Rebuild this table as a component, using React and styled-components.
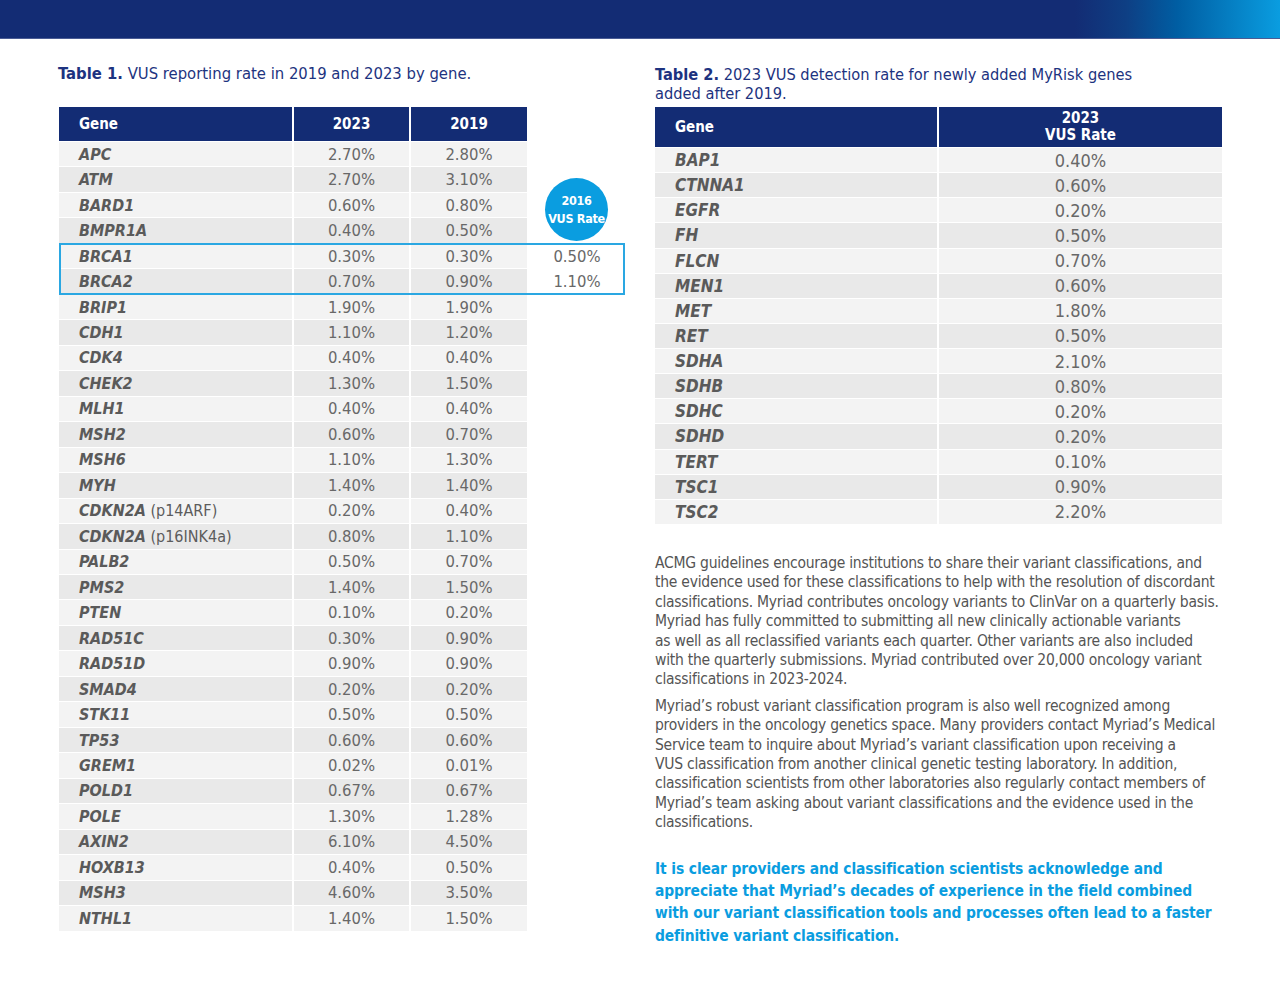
import React from 'react';
import styled, { createGlobalStyle } from 'styled-components';

const GlobalStyle = createGlobalStyle`
  body {
    margin: 0;
    background: #fff;
    font-family: 'DejaVu Sans Condensed', 'Liberation Sans Narrow', 'Liberation Sans', sans-serif;
  }
  * {
    box-sizing: border-box;
  }
`;

const navy = '#132c74';
const cyan = '#0a9de0';

const TopBar = styled.div`
  height: 39px;
  background: linear-gradient(90deg, ${navy} 0%, ${navy} 84%, #0e3f84 88%, #005ea3 92%, #0a9de0 100%);
  border-bottom: 1px solid #4a5c94;
`;

const Page = styled.div`
  display: grid;
  grid-template-columns: 567px 567px;
  column-gap: 30px;
  padding: 24px 0 0 58px;
`;

const Column = styled.div`
  display: flex;
  flex-direction: column;
`;

const Caption = styled.div`
  color: #1d3380;
  font-size: ${p => p.fs}px;
  line-height: 19px;
  height: ${p => p.h}px;
  padding-top: ${p => p.pt}px;
  b {
    font-weight: 700;
  }
`;

const Table = styled.div`
  position: relative;
  width: ${p => p.w}px;
  margin-left: ${p => p.ml || 0}px;
`;

const Row = styled.div`
  display: grid;
  grid-template-columns: ${p => p.cols};
  column-gap: 2px;
  height: ${p => p.h}px;
  border-top: ${p => (p.header ? 'none' : '1px solid #fff')};
`;

const HeadCell = styled.div`
  background: ${p => (p.blank ? 'transparent' : navy)};
  color: #fff;
  font-weight: 700;
  font-size: 15px;
  line-height: 17px;
  display: flex;
  flex-direction: column;
  justify-content: center;
  align-items: ${p => (p.left ? 'flex-start' : 'center')};
  padding-left: ${p => (p.left ? '20px' : '0')};
  text-align: center;
`;

const GeneCell = styled.div`
  background: ${p => (p.odd ? '#f3f3f3' : '#e9e9e9')};
  color: #5a5a5a;
  font-style: italic;
  font-weight: 700;
  font-size: ${p => p.fs}px;
  display: flex;
  align-items: center;
  padding-left: 20px;
  span {
    font-style: normal;
    font-weight: 400;
    color: #5c5c5c;
  }
`;

const NumCell = styled.div`
  background: ${p => (p.blank ? 'transparent' : p.odd ? '#f3f3f3' : '#e9e9e9')};
  color: #686868;
  font-size: ${p => p.fs}px;
  display: flex;
  align-items: center;
  justify-content: center;
`;

const Highlight = styled.div`
  position: relative;
  &::after {
    content: '';
    position: absolute;
    inset: 0 0 -1px 0;
    border: 2px solid #2aa7e2;
    pointer-events: none;
  }
`;

const Badge = styled.div`
  position: absolute;
  left: 486px;
  top: 71px;
  width: 63px;
  height: 63px;
  border-radius: 50%;
  background: ${cyan};
  color: #fff;
  font-weight: 700;
  font-size: 12.5px;
  letter-spacing: -0.3px;
  line-height: 18px;
  white-space: nowrap;
  display: flex;
  align-items: center;
  justify-content: center;
  text-align: center;
`;

const Text = styled.p`
  margin: ${p => p.mt || 0}px 0 0;
  color: #555;
  font-size: 15.5px;
  letter-spacing: -0.25px;
  line-height: 19.4px;
  white-space: nowrap;
`;

const Callout = styled.p`
  margin: 25px 0 0;
  color: ${cyan};
  font-weight: 700;
  font-size: 15.4px;
  letter-spacing: -0.1px;
  line-height: 22.4px;
  white-space: nowrap;
`;

const table1 = [
  ['APC', '2.70%', '2.80%'],
  ['ATM', '2.70%', '3.10%'],
  ['BARD1', '0.60%', '0.80%'],
  ['BMPR1A', '0.40%', '0.50%'],
  ['BRCA1', '0.30%', '0.30%', '0.50%'],
  ['BRCA2', '0.70%', '0.90%', '1.10%'],
  ['BRIP1', '1.90%', '1.90%'],
  ['CDH1', '1.10%', '1.20%'],
  ['CDK4', '0.40%', '0.40%'],
  ['CHEK2', '1.30%', '1.50%'],
  ['MLH1', '0.40%', '0.40%'],
  ['MSH2', '0.60%', '0.70%'],
  ['MSH6', '1.10%', '1.30%'],
  ['MYH', '1.40%', '1.40%'],
  ['CDKN2A|(p14ARF)', '0.20%', '0.40%'],
  ['CDKN2A|(p16INK4a)', '0.80%', '1.10%'],
  ['PALB2', '0.50%', '0.70%'],
  ['PMS2', '1.40%', '1.50%'],
  ['PTEN', '0.10%', '0.20%'],
  ['RAD51C', '0.30%', '0.90%'],
  ['RAD51D', '0.90%', '0.90%'],
  ['SMAD4', '0.20%', '0.20%'],
  ['STK11', '0.50%', '0.50%'],
  ['TP53', '0.60%', '0.60%'],
  ['GREM1', '0.02%', '0.01%'],
  ['POLD1', '0.67%', '0.67%'],
  ['POLE', '1.30%', '1.28%'],
  ['AXIN2', '6.10%', '4.50%'],
  ['HOXB13', '0.40%', '0.50%'],
  ['MSH3', '4.60%', '3.50%'],
  ['NTHL1', '1.40%', '1.50%'],
];

const table2 = [
  ['BAP1', '0.40%'],
  ['CTNNA1', '0.60%'],
  ['EGFR', '0.20%'],
  ['FH', '0.50%'],
  ['FLCN', '0.70%'],
  ['MEN1', '0.60%'],
  ['MET', '1.80%'],
  ['RET', '0.50%'],
  ['SDHA', '2.10%'],
  ['SDHB', '0.80%'],
  ['SDHC', '0.20%'],
  ['SDHD', '0.20%'],
  ['TERT', '0.10%'],
  ['TSC1', '0.90%'],
  ['TSC2', '2.20%'],
];

const cols1 = '233px 115px 116px 96px';
const cols2 = '282px 283px';

const Gene = ({ name }) => {
  const [g, extra] = name.split('|');
  return (
    <>
      {g}
      {extra && <span>&nbsp;{extra}</span>}
    </>
  );
};

const row1 = ([gene, a, b, c], i) => (
  <Row key={gene} cols={cols1} h={25.48}>
    <GeneCell odd={i % 2 === 0} fs={16}>
      <Gene name={gene} />
    </GeneCell>
    <NumCell odd={i % 2 === 0} fs={16.5}>{a}</NumCell>
    <NumCell odd={i % 2 === 0} fs={16.5}>{b}</NumCell>
    <NumCell blank fs={16.5}>{c}</NumCell>
  </Row>
);

const row2 = ([gene, a], i) => (
  <Row key={gene} cols={cols2} h={25.13}>
    <GeneCell odd={i % 2 === 0} fs={17}>{gene}</GeneCell>
    <NumCell odd={i % 2 === 0} fs={18}>{a}</NumCell>
  </Row>
);

export default function App() {
  return (
    <>
      <GlobalStyle />
      <TopBar />
      <Page>
        <Column>
          <Caption h={44} pt={1} fs={16.5}>
            <b>Table 1.</b> VUS reporting rate in 2019 and 2023 by gene.
          </Caption>
          <Table w={566} ml={1}>
            <Row header cols={cols1} h={34}>
              <HeadCell left>Gene</HeadCell>
              <HeadCell>2023</HeadCell>
              <HeadCell>2019</HeadCell>
              <HeadCell blank />
            </Row>
            {table1.slice(0, 4).map((r, i) => row1(r, i))}
            <Highlight>{table1.slice(4, 6).map((r, i) => row1(r, i + 4))}</Highlight>
            {table1.slice(6).map((r, i) => row1(r, i + 6))}
            <Badge>
              2016
              <br />
              VUS Rate
            </Badge>
          </Table>
        </Column>
        <Column>
          <Caption h={44} pt={2} fs={16.3}>
            <b>Table 2.</b> 2023 VUS detection rate for newly added MyRisk genes
            <br />
            added after 2019.
          </Caption>
          <Table w={567}>
            <Row header cols={cols2} h={40}>
              <HeadCell left>Gene</HeadCell>
              <HeadCell>
                2023
                <br />
                VUS Rate
              </HeadCell>
            </Row>
            {table2.map(row2)}
          </Table>
          <Text mt={30}>
            ACMG guidelines encourage institutions to share their variant classifications, and
            <br />
            the evidence used for these classifications to help with the resolution of discordant
            <br />
            classifications. Myriad contributes oncology variants to ClinVar on a quarterly basis.
            <br />
            Myriad has fully committed to submitting all new clinically actionable variants
            <br />
            as well as all reclassified variants each quarter. Other variants are also included
            <br />
            with the quarterly submissions. Myriad contributed over 20,000 oncology variant
            <br />
            classifications in 2023-2024.
          </Text>
          <Text mt={7}>
            Myriad’s robust variant classification program is also well recognized among
            <br />
            providers in the oncology genetics space. Many providers contact Myriad’s Medical
            <br />
            Service team to inquire about Myriad’s variant classification upon receiving a
            <br />
            VUS classification from another clinical genetic testing laboratory. In addition,
            <br />
            classification scientists from other laboratories also regularly contact members of
            <br />
            Myriad’s team asking about variant classifications and the evidence used in the
            <br />
            classifications.
          </Text>
          <Callout>
            It is clear providers and classification scientists acknowledge and
            <br />
            appreciate that Myriad’s decades of experience in the field combined
            <br />
            with our variant classification tools and processes often lead to a faster
            <br />
            definitive variant classification.
          </Callout>
        </Column>
      </Page>
    </>
  );
}
